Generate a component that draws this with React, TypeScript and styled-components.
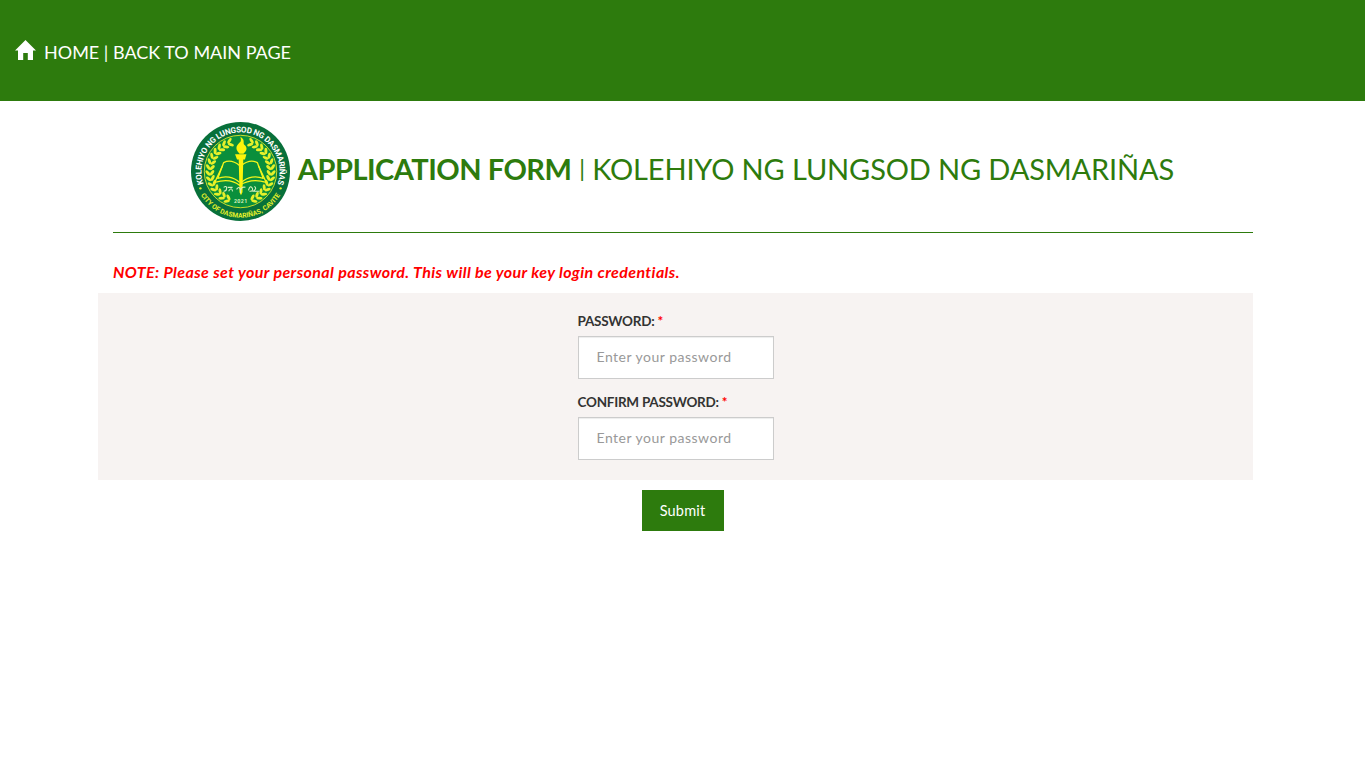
import React from 'react';
import styled, { createGlobalStyle } from 'styled-components';

const GREEN = '#2d7b0d';

const GlobalStyle = createGlobalStyle`
  * { box-sizing: border-box; }
  body {
    margin: 0;
    background: #fff;
    color: #333;
    font-family: Lato, "Open Sans", sans-serif;
    font-size: 14px;
    line-height: 20px;
  }
`;

const TopBar = styled.header`
  height: 101px;
  padding: 0 15px;
  display: flex;
  align-items: center;
  background: ${GREEN};
`;

const HomeLink = styled.a`
  display: flex;
  align-items: center;
  gap: 8px;
  color: #fff;
  font-size: 18px;
  line-height: 26px;
  text-decoration: none;
  padding-top: 2px;
`;

const HomeLabel = styled.span`
  white-space: nowrap;
`;

const HomeIcon = styled.svg`
  width: 21px;
  height: 20px;
  margin-top: -3px;
`;

const Container = styled.main`
  width: 1140px;
  margin-left: 113px;
`;

const Heading = styled.div`
  height: 132px;
  padding: 21px 1px 0 0;
  display: flex;
  justify-content: center;
  align-items: flex-start;
  gap: 8px;
  border-bottom: 1px solid ${GREEN};
`;

const Title = styled.h1`
  display: flex;
  margin: 0;
  padding-top: 27px;
  color: ${GREEN};
  font-size: 29px;
  line-height: 40px;
  font-weight: 400;
  white-space: nowrap;
`;

const TitleStrong = styled.strong`
  font-weight: 700;
  letter-spacing: -0.5px;
`;

const Divider = styled.span`
  padding: 0 7px 0 8px;
  font-size: 23px;
  line-height: 38px;
`;

const College = styled.span`
  letter-spacing: -0.14px;
`;

const Note = styled.p`
  margin: 29px 0 0;
  height: 31px;
  color: #f00;
  font-size: 16px;
  font-style: italic;
  font-weight: 700;
  letter-spacing: 0.39px;
`;

const Panel = styled.section`
  width: 1155px;
  height: 187px;
  margin-left: -15px;
  padding-top: 18px;
  display: flex;
  flex-direction: column;
  align-items: center;
  gap: 13px;
  background: #f7f3f2;
`;

const Field = styled.label`
  width: 196px;
  display: flex;
  flex-direction: column;
  gap: 5px;
`;

const FieldName = styled.span`
  font-size: 13.5px;
  font-weight: 700;
  letter-spacing: -0.25px;
  white-space: nowrap;
`;

const Required = styled.span`
  color: #f00;
`;

const Input = styled.input`
  width: 196px;
  height: 43px;
  padding: 0 18px 2px;
  border: 1px solid #ccc;
  border-radius: 0;
  box-shadow: inset 0 1px 1px rgba(0, 0, 0, 0.075);
  background: #fff;
  font: 14px Lato, sans-serif;
  letter-spacing: 0.5px;
  &::placeholder { color: #999; opacity: 1; }
`;

const Actions = styled.div`
  display: flex;
  justify-content: center;
  padding-top: 10px;
`;

const Submit = styled.button`
  width: 82px;
  height: 41px;
  padding: 0;
  border: 0;
  background: ${GREEN};
  color: #fff;
  font: 14.5px Lato, sans-serif;
  letter-spacing: 0.2px;
`;

const SealSvg = styled.svg`
  width: 99px;
  height: 99px;
  flex: none;
`;

const leafAngles = Array.from({ length: 14 }, (_, i) => 115 + i * 10.4);

function WreathSide() {
  return (
    <g fill="#e6f02a">
      {leafAngles.map((a) => (
        <g key={a} transform={`rotate(${a} 50 50)`}>
          <ellipse cx="83" cy="50" rx="3.2" ry="1.5" transform="rotate(52 83 50)" />
          <ellipse cx="78.8" cy="50" rx="3.2" ry="1.5" transform="rotate(128 78.8 50)" />
        </g>
      ))}
    </g>
  );
}

function Seal() {
  return (
    <SealSvg viewBox="0 0 100 100" role="img" aria-label="College seal">
      <defs>
        <path id="upper" d="M14.2 66.7 A39.5 39.5 0 1 1 85.8 66.7" />
        <path id="lower" d="M10.6 75 A46.6 46.6 0 0 0 89.4 75" />
      </defs>
      <circle cx="50" cy="50" r="50" fill="#08703a" />
      <circle cx="50" cy="50" r="36.6" fill="#0a8f3c" stroke="#dfe82c" strokeWidth="0.9" />
      <text fill="#fff" fontFamily="Roboto, sans-serif" fontWeight="700" fontSize="8.2" letterSpacing="-0.3" textAnchor="middle">
        <textPath href="#upper" startOffset="50%">KOLEHIYO NG LUNGSOD NG DASMARIÑAS</textPath>
      </text>
      <text fill="#e6f02a" fontFamily="Roboto, sans-serif" fontWeight="700" fontSize="6.8" textAnchor="middle">
        <textPath href="#lower" startOffset="50%">CITY OF DASMARIÑAS, CAVITE</textPath>
      </text>
      <circle cx="9.5" cy="67" r="1.2" fill="#e6f02a" />
      <circle cx="90.5" cy="67" r="1.2" fill="#e6f02a" />
      <WreathSide />
      <g transform="translate(100 0) scale(-1 1)"><WreathSide /></g>
      <g fill="none" stroke="#f4f51c" strokeWidth="1.3" strokeLinejoin="round">
        <path d="M49 44 C43 39 37 39 33 41 L27 57 C34 54 43 55 49 61" />
        <path d="M51 44 C57 39 63 39 67 41 L73 57 C66 54 57 55 51 61" />
        <path d="M32 44 L24 61 C34 58 43 59 49 64 C57 59 66 58 76 61 L68 44" />
      </g>
      <path d="M44.5 32.5 H56 L54.5 38 H52.8 L52 71 L50.5 74 L49 71 L48.2 38 H46.5 Z" fill="#fcf40b" />
      <path d="M49 32 C43 26 47 23 50 20 C51 18 50 17 50 15 C56 19 51 22 55 24 C58 28 54 31 53 32 Z" fill="#fcf40b" />
      <g fill="none" stroke="#d6efbe" strokeWidth="1.1">
        <path d="M33 66 q3 -2 3 1 q0 3 -3 3 M37 66 l5 0 M38 70 q3 -5 4 0" />
        <path d="M46 68 q3 -4 4 1 q1 -4 5 -3 M50 69 v3" />
        <path d="M58 69 q2 -6 4 -2 q1 3 -3 3 M64 65 q3 2 -1 5 h6" />
      </g>
      <text x="50.3" y="82" textAnchor="middle" fill="#d6efbe" fontFamily="Roboto, sans-serif" fontWeight="700" fontSize="5.4" letterSpacing="0.4">2021</text>
    </SealSvg>
  );
}

function PasswordField({ name }: { name: string }) {
  return (
    <Field>
      <FieldName><span>{name}</span> <Required>*</Required></FieldName>
      <Input type="password" placeholder="Enter your password" />
    </Field>
  );
}

export default function App() {
  return (
    <>
      <GlobalStyle />
      <TopBar>
        <HomeLink href="#">
          <HomeIcon viewBox="0 0 21 20" aria-hidden="true">
            <path fill="#fff" d="M10.5 0 L21 10.5 H18 V20 H12.8 V13 H8.2 V20 H3 V10.5 H0 Z" />
          </HomeIcon>
          <HomeLabel>HOME | BACK TO MAIN PAGE</HomeLabel>
        </HomeLink>
      </TopBar>
      <Container>
        <Heading>
          <Seal />
          <Title>
            <TitleStrong>APPLICATION FORM</TitleStrong>
            <Divider>|</Divider>
            <College>KOLEHIYO NG LUNGSOD NG DASMARIÑAS</College>
          </Title>
        </Heading>
        <Note>NOTE: Please set your personal password. This will be your key login credentials.</Note>
        <Panel>
          <PasswordField name="PASSWORD:" />
          <PasswordField name="CONFIRM PASSWORD:" />
        </Panel>
      </Container>
      <Actions><Submit>Submit</Submit></Actions>
    </>
  );
}
